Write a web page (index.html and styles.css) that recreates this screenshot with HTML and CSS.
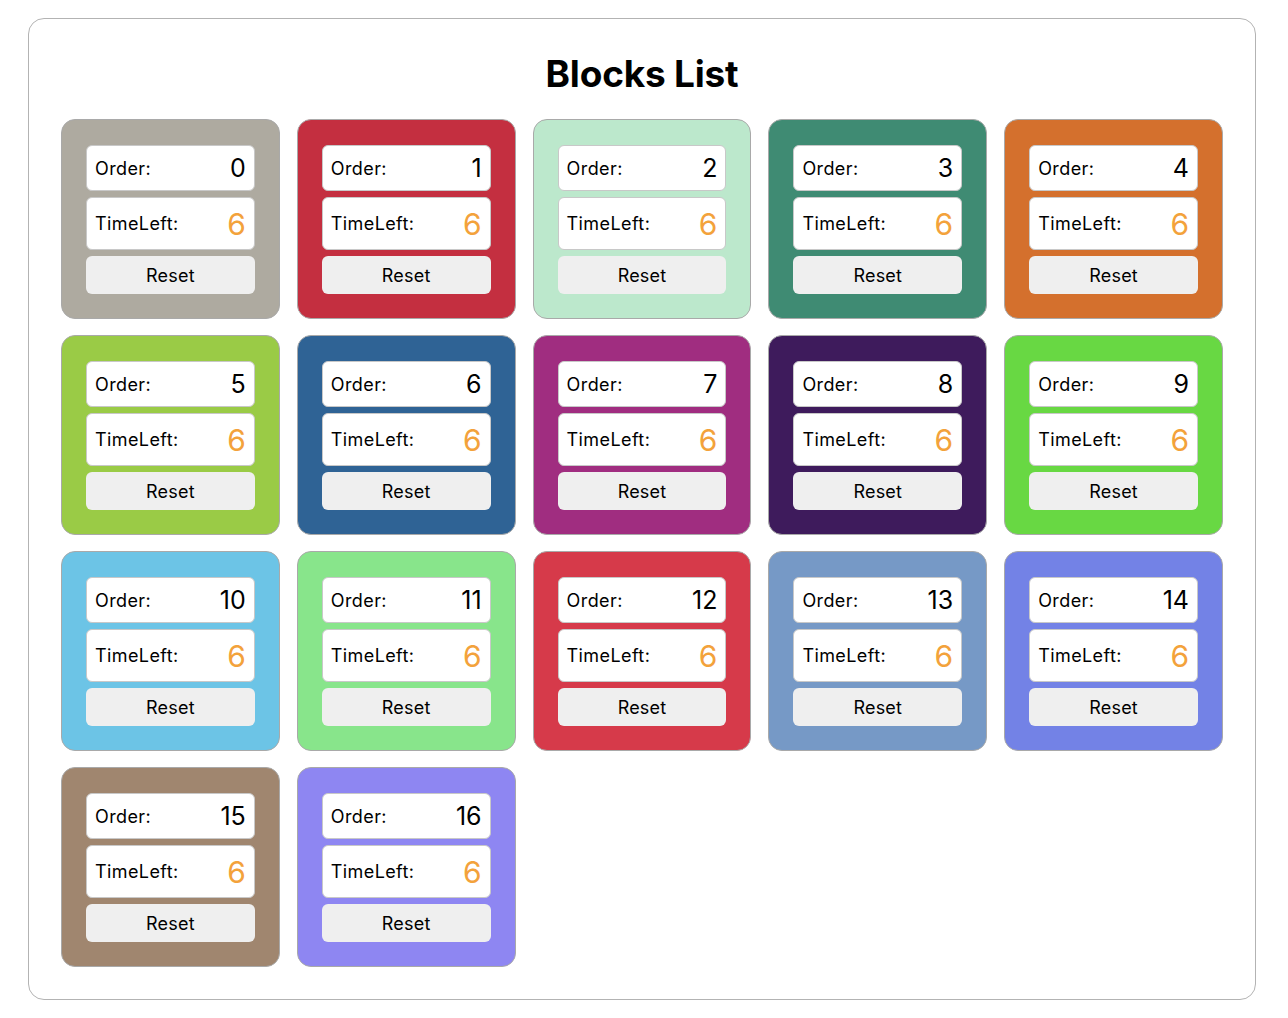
FILE: index.html
```html
<!DOCTYPE html>
<html lang="en">
<head>
<meta charset="utf-8">
<title>Blocks List</title>
<link rel="stylesheet" href="styles.css">
</head>
<body>
<div class="container">
  <h1 class="title">Blocks List</h1>
  <div class="grid">
    <div class="block c0"><div class="row order"><span class="label">Order:</span><span class="num">0</span></div><div class="row time"><span class="label">TimeLeft:</span><span class="timeval">6</span></div><button class="reset">Reset</button></div>
    <div class="block c1"><div class="row order"><span class="label">Order:</span><span class="num">1</span></div><div class="row time"><span class="label">TimeLeft:</span><span class="timeval">6</span></div><button class="reset">Reset</button></div>
    <div class="block c2"><div class="row order"><span class="label">Order:</span><span class="num">2</span></div><div class="row time"><span class="label">TimeLeft:</span><span class="timeval">6</span></div><button class="reset">Reset</button></div>
    <div class="block c3"><div class="row order"><span class="label">Order:</span><span class="num">3</span></div><div class="row time"><span class="label">TimeLeft:</span><span class="timeval">6</span></div><button class="reset">Reset</button></div>
    <div class="block c4"><div class="row order"><span class="label">Order:</span><span class="num">4</span></div><div class="row time"><span class="label">TimeLeft:</span><span class="timeval">6</span></div><button class="reset">Reset</button></div>
    <div class="block c5"><div class="row order"><span class="label">Order:</span><span class="num">5</span></div><div class="row time"><span class="label">TimeLeft:</span><span class="timeval">6</span></div><button class="reset">Reset</button></div>
    <div class="block c6"><div class="row order"><span class="label">Order:</span><span class="num">6</span></div><div class="row time"><span class="label">TimeLeft:</span><span class="timeval">6</span></div><button class="reset">Reset</button></div>
    <div class="block c7"><div class="row order"><span class="label">Order:</span><span class="num">7</span></div><div class="row time"><span class="label">TimeLeft:</span><span class="timeval">6</span></div><button class="reset">Reset</button></div>
    <div class="block c8"><div class="row order"><span class="label">Order:</span><span class="num">8</span></div><div class="row time"><span class="label">TimeLeft:</span><span class="timeval">6</span></div><button class="reset">Reset</button></div>
    <div class="block c9"><div class="row order"><span class="label">Order:</span><span class="num">9</span></div><div class="row time"><span class="label">TimeLeft:</span><span class="timeval">6</span></div><button class="reset">Reset</button></div>
    <div class="block c10"><div class="row order"><span class="label">Order:</span><span class="num">10</span></div><div class="row time"><span class="label">TimeLeft:</span><span class="timeval">6</span></div><button class="reset">Reset</button></div>
    <div class="block c11"><div class="row order"><span class="label">Order:</span><span class="num">11</span></div><div class="row time"><span class="label">TimeLeft:</span><span class="timeval">6</span></div><button class="reset">Reset</button></div>
    <div class="block c12"><div class="row order"><span class="label">Order:</span><span class="num">12</span></div><div class="row time"><span class="label">TimeLeft:</span><span class="timeval">6</span></div><button class="reset">Reset</button></div>
    <div class="block c13"><div class="row order"><span class="label">Order:</span><span class="num">13</span></div><div class="row time"><span class="label">TimeLeft:</span><span class="timeval">6</span></div><button class="reset">Reset</button></div>
    <div class="block c14"><div class="row order"><span class="label">Order:</span><span class="num">14</span></div><div class="row time"><span class="label">TimeLeft:</span><span class="timeval">6</span></div><button class="reset">Reset</button></div>
    <div class="block c15"><div class="row order"><span class="label">Order:</span><span class="num">15</span></div><div class="row time"><span class="label">TimeLeft:</span><span class="timeval">6</span></div><button class="reset">Reset</button></div>
    <div class="block c16"><div class="row order"><span class="label">Order:</span><span class="num">16</span></div><div class="row time"><span class="label">TimeLeft:</span><span class="timeval">6</span></div><button class="reset">Reset</button></div>
  </div>
</div>
</body>
</html>
```

FILE: styles.css
```css
* { box-sizing: border-box; }

html, body {
  margin: 0;
  padding: 0;
  background: #ffffff;
  font-family: Inter, "Noto Sans", "Liberation Sans", sans-serif;
  color: #000;
}

.container {
  margin: 18px 32px 18px 28px;
  border: 1px solid #b3b3b3;
  border-radius: 16px;
  padding: 36px 32px 32px;
}

.title {
  margin: 0 0 26px;
  text-align: center;
  font-size: 37px;
  font-weight: 700;
  line-height: 38px;
  letter-spacing: -0.2px;
}

.grid {
  display: grid;
  grid-template-columns: repeat(5, 1fr);
  column-gap: 17px;
  row-gap: 16px;
}

.block {
  height: 200px;
  border: 1px solid #a9a9a9;
  border-radius: 14px;
  padding: 25px 24px 24px;
  display: flex;
  flex-direction: column;
  gap: 6px;
}

.row {
  background: #fff;
  border: 1px solid #c8c8c8;
  border-radius: 6px;
  display: flex;
  align-items: center;
  justify-content: space-between;
  padding: 0 8px;
}

.order { height: 46px; }
.time { height: 53px; }

.label {
  font-size: 18px;
  letter-spacing: 0.4px;
}

.num {
  font-size: 25px;
  font-weight: 400;
}

.timeval {
  font-size: 30px;
  color: #f3a23b;
  font-weight: 400;
}

.reset {
  height: 38px;
  border: none;
  border-radius: 6px;
  background: #efefef;
  font-family: inherit;
  font-size: 18px;
  letter-spacing: 0.2px;
  color: #000;
  padding: 0;
}

.c0 { background: #aeaaa0; }
.c1 { background: #c42f40; }
.c2 { background: #bce8cc; }
.c3 { background: #3f8b73; }
.c4 { background: #d4702d; }
.c5 { background: #9acb46; }
.c6 { background: #2f6395; }
.c7 { background: #a02d80; }
.c8 { background: #3e1b5c; }
.c9 { background: #68d843; }
.c10 { background: #6cc4e6; }
.c11 { background: #88e58b; }
.c12 { background: #d63a4a; }
.c13 { background: #7699c6; }
.c14 { background: #7382e6; }
.c15 { background: #a0866f; }
.c16 { background: #8e86f2; }
```
